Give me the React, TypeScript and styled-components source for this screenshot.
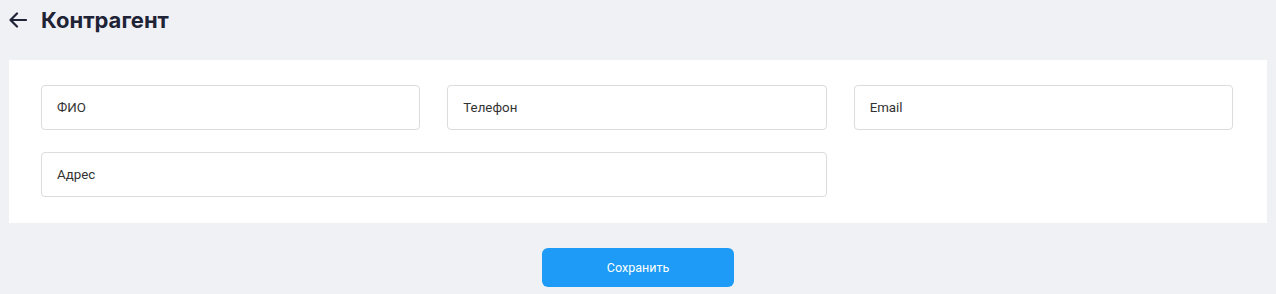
import styled, { createGlobalStyle } from "styled-components";

const GlobalStyle = createGlobalStyle`
  body {
    margin: 0;
    background: #f0f1f5;
    font-family: Inter, "Noto Sans", sans-serif;
  }
`;

const fields = [
  { name: "fio", label: "ФИО", wide: false },
  { name: "phone", label: "Телефон", wide: false },
  { name: "email", label: "Email", wide: false },
  { name: "address", label: "Адрес", wide: true },
];

const App = () => {
  return (
    <>
      <GlobalStyle />
      <Page>
        <Header>
          <Back type="button" aria-label="Назад">
            <svg width="18" height="16" viewBox="0 0 18 16" fill="none">
              <path
                d="M17 8H2M8 1.5L1.5 8L8 14.5"
                stroke="#1f2336"
                strokeWidth="2.2"
                strokeLinecap="round"
                strokeLinejoin="round"
              />
            </svg>
          </Back>
          <Title>Контрагент</Title>
        </Header>
        <Card>
          <Grid>
            {fields.map((f) => (
              <Input key={f.name} $wide={f.wide} placeholder={f.label} />
            ))}
          </Grid>
        </Card>
        <Footer>
          <SaveButton type="button">Сохранить</SaveButton>
        </Footer>
      </Page>
    </>
  );
};

const Page = styled.div`
  padding: 0 9px;
`;

const Header = styled.div`
  display: flex;
  align-items: center;
  height: 39px;
  gap: 14px;
  margin-bottom: 21px;
`;

const Back = styled.button`
  display: flex;
  align-items: center;
  padding: 0;
  border: none;
  background: none;
  cursor: pointer;
`;

const Title = styled.h1`
  margin: 0;
  font-size: 22px;
  font-weight: 700;
  color: #1f2336;
`;

const Card = styled.div`
  background: #fff;
  padding: 25px 34px 26px 32px;
`;

const Grid = styled.div`
  display: grid;
  grid-template-columns: repeat(3, 1fr);
  column-gap: 27px;
  row-gap: 22px;
`;

const Input = styled.input<{ $wide: boolean }>`
  grid-column: ${(p) => (p.$wide ? "span 2" : "auto")};
  box-sizing: border-box;
  height: 45px;
  padding: 0 15px;
  border: 1px solid #dcdcdf;
  border-radius: 4px;
  font-family: Roboto, "Noto Sans", sans-serif;
  font-size: 13.3px;
  color: #333;
  outline: none;

  &::placeholder {
    color: #333;
  }
`;

const Footer = styled.div`
  display: flex;
  justify-content: center;
  padding-top: 25px;
`;

const SaveButton = styled.button`
  width: 192px;
  height: 39px;
  border: none;
  border-radius: 6px;
  background: #1d9bf6;
  color: #fff;
  font-family: Roboto, "Noto Sans", sans-serif;
  font-size: 12.5px;
  cursor: pointer;
`;

export default App;
